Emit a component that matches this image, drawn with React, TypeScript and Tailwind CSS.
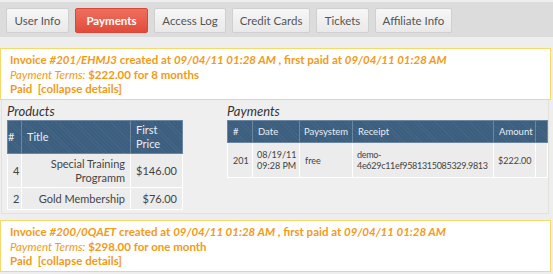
import React from "react";

const tabs: [string, string][] = [
  ["User Info", "w-[63px]"],
  ["Payments", "w-[73px]"],
  ["Access Log", "w-[72px]"],
  ["Credit Cards", "w-[78px]"],
  ["Tickets", "w-[53px]"],
  ["Affiliate Info", "w-[77px]"],
];

function Tab({ label, w, active }: { label: string; w: string; active?: boolean }) {
  if (active) {
    return (
      <div className={w + " h-[25px] flex items-center justify-center rounded-[2px] border border-[#d9473a] bg-gradient-to-b from-[#ef6f5e] to-[#e14b3b] text-white font-bold text-[11.5px]"}>
        {label}
      </div>
    );
  }
  return (
    <div className={w + " h-[25px] flex items-center justify-center rounded-[2px] border border-[#d0d0d0] bg-gradient-to-b from-[#f7f7f7] to-[#e9e9e9] text-[#555] text-[11.5px]"}>
      {label}
    </div>
  );
}

function Invoice({ num, terms }: { num: string; terms: string }) {
  return (
    <div className="h-[52px] w-[551px] border border-[#f7d96b] bg-white pl-[9px] pt-[4px] text-[11.5px] font-bold leading-[14.5px] text-[#f39a16]">
      <div>
        Invoice <i>#{num}</i> created at <i>09/04/11 01:28 AM</i> , first paid at <i>09/04/11 01:28 AM</i>
      </div>
      <div>
        <i className="font-normal">Payment Terms:</i> {terms}
      </div>
      <div>
        Paid&nbsp; [collapse details]
      </div>
    </div>
  );
}

const thBase =
  "border border-[#6b86a0] bg-[#3c5e7e] bg-[repeating-linear-gradient(45deg,rgba(255,255,255,0.05)_0_1px,transparent_1px_3px)] text-[#e8eef4] font-normal text-left align-middle";
const th = thBase + " px-[5px] text-[11px] leading-[14px]";
const td = "border border-white bg-[#ececec] text-[#444] text-[11px] leading-[14px] px-[5px] align-middle";
const th2 = thBase + " px-[5px] text-[9.5px] leading-[11px]";
const td2 = "border border-white bg-[#ececec] text-[#444] text-[9px] leading-[11px] px-[5px] align-middle";

export default function App() {
  return (
    <div className="w-[553px] h-[274px] bg-[#eeeeee] overflow-hidden font-['Lato',sans-serif]">
      <div className="mt-[2px] h-[35px] bg-[#dcdcdc] flex gap-[6px] pl-[6px] pt-[6px]">
        {tabs.map(([t, w]) => (
          <Tab key={t} label={t} w={w} active={t === "Payments"} />
        ))}
      </div>
      <div className="h-[11px]" />
      <Invoice num="201/EHMJ3" terms="$222.00 for 8 months" />
      <div className="h-[114px] w-[548px] ml-[1px] border-x border-b border-[#e2e2d8] bg-[#efefef] flex gap-[44px] pl-[5px]">
        <div>
          <div className="h-[20px] pt-[3px] text-[13px] italic text-[#333] leading-[16px]">Products</div>
          <table className="border-collapse table-fixed w-[175px]">
            <colgroup>
              <col className="w-[14px]" />
              <col className="w-[109px]" />
              <col className="w-[52px]" />
            </colgroup>
            <thead>
              <tr className="h-[33px]">
                <th className={th + " !px-0 text-center"}>#</th>
                <th className={th}>Title</th>
                <th className={th}>First Price</th>
              </tr>
            </thead>
            <tbody>
              <tr className="h-[34px]">
                <td className={td}>4</td>
                <td className={td + " text-right"}>Special Training Programm</td>
                <td className={td + " text-right"}>$146.00</td>
              </tr>
              <tr className="h-[22px]">
                <td className={td}>2</td>
                <td className={td + " text-right whitespace-nowrap"}>Gold Membership</td>
                <td className={td + " text-right"}>$76.00</td>
              </tr>
            </tbody>
          </table>
        </div>
        <div>
          <div className="h-[20px] pt-[3px] text-[13px] italic text-[#333] leading-[16px]">Payments</div>
          <table className="border-collapse table-fixed w-[320px]">
            <colgroup>
              <col className="w-[25px]" />
              <col className="w-[47px]" />
              <col className="w-[53px]" />
              <col className="w-[141px]" />
              <col className="w-[42px]" />
              <col className="w-[12px]" />
            </colgroup>
            <thead>
              <tr className="h-[22px]">
                <th className={th2}>#</th>
                <th className={th2}>Date</th>
                <th className={th2 + " !px-[4px]"}>Paysystem</th>
                <th className={th2}>Receipt</th>
                <th className={th2}>Amount</th>
                <th className={th2}></th>
              </tr>
            </thead>
            <tbody>
              <tr className="h-[35px]">
                <td className={td2}>201</td>
                <td className={td2 + " !px-[4px] whitespace-nowrap"}>
                  08/19/11
                  <br />
                  09:28 PM
                </td>
                <td className={td2}>free</td>
                <td className={td2 + " !px-[4px] whitespace-nowrap tracking-[-0.3px]"}>
                  demo-
                  <br />
                  4e629c11ef9581315085329.9813
                </td>
                <td className={td2 + " !px-[4px]"}>$222.00</td>
                <td className={td2}></td>
              </tr>
            </tbody>
          </table>
        </div>
      </div>
      <div className="h-[6px]" />
      <Invoice num="200/0QAET" terms="$298.00 for one month" />
    </div>
  );
}
